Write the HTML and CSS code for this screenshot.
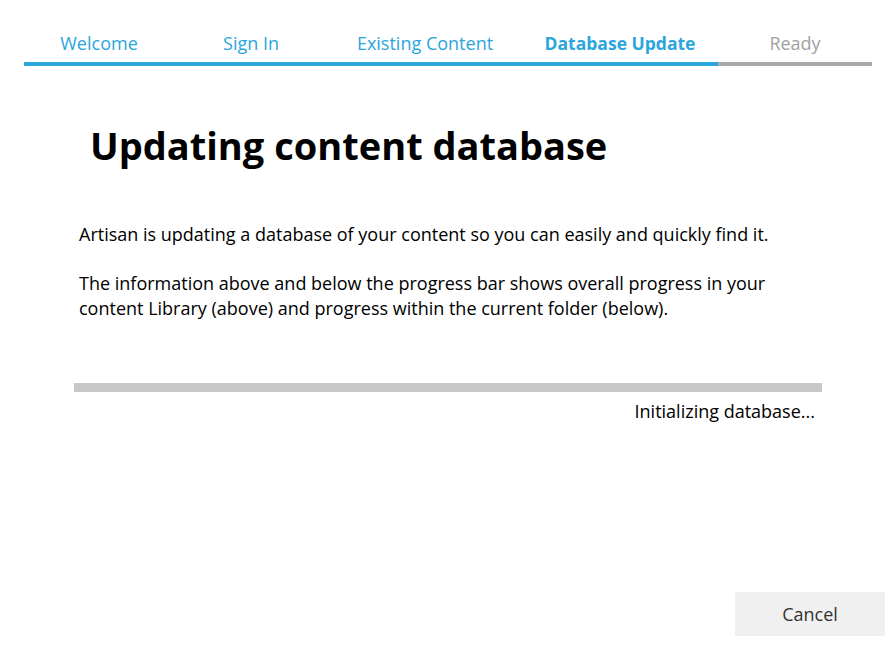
FILE: index.html
```html
<!DOCTYPE html>
<html lang="en">

<head>
    <meta charset="UTF-8">
    <meta name="viewport" content="width=device-width, initial-scale=1.0">
    <title>Artisan - Database Update</title>
    <link rel="stylesheet" href="styles.css">
</head>

<body>
    <!-- Steps -->
    <nav class="steps">
        <div class="step done" style="width: 150px">Welcome</div>
        <div class="step done" style="width: 154px">Sign In</div>
        <div class="step done" style="width: 194px">Existing Content</div>
        <div class="step current" style="width: 196px">Database Update</div>
        <div class="step" style="width: 154px">Ready</div>
    </nav>

    <!-- Content -->
    <main>
        <h1 class="title">Updating content database</h1>
        <p class="text">Artisan is updating a database of your content so you can easily and quickly find it.</p>
        <p class="text">The information above and below the progress bar shows overall progress in your content Library (above) and progress within the current folder (below).</p>

        <div class="progress">
            <div class="progress-bar"></div>
            <div class="progress-label">Initializing database...</div>
        </div>
    </main>

    <footer>
        <button class="btn-cancel">Cancel</button>
    </footer>
</body>

</html>
```

FILE: styles.css
```css
* {
    margin: 0;
    padding: 0;
    box-sizing: border-box;
    font-family: 'Open Sans', 'Liberation Sans', sans-serif;
}

:root {
    --blue: #2aa6dc;
    --grey-line: #a8a8a8;
    --grey-text: #a0a0a0;
    --bar: #c8c8c8;
}

body {
    background: #fff;
    color: #000;
    display: flex;
    flex-direction: column;
    min-height: 100vh;
}

/* Steps */
.steps {
    display: flex;
    padding: 30px 0 0 24px;
}

.step {
    text-align: center;
    font-size: 18px;
    line-height: 26px;
    padding-bottom: 6px;
    border-bottom: 4px solid var(--grey-line);
    color: var(--grey-text);
}

.step.done,
.step.current {
    color: var(--blue);
    border-bottom-color: var(--blue);
}

.step.current {
    font-weight: bold;
    font-size: 17.5px;
}

/* Content */
main {
    flex: 1;
}

.title {
    font-size: 38px;
    font-weight: bold;
    margin: 54px 0 52px 90px;
    line-height: 50px;
}

.text {
    font-size: 18px;
    line-height: 25px;
    margin: 0 0 24px 79px;
    max-width: 720px;
}

.progress {
    margin: 62px 0 0 74px;
    width: 748px;
}

.progress-bar {
    height: 9px;
    background: var(--bar);
}

.progress-label {
    text-align: right;
    font-size: 18px;
    line-height: 25px;
    margin-top: 7px;
    padding-right: 7px;
}

/* Footer */
footer {
    display: flex;
    justify-content: flex-end;
    padding: 0 11px 10px 0;
}

.btn-cancel {
    width: 150px;
    height: 44px;
    border: none;
    background: #f0f0f0;
    color: #333;
    font-size: 18px;
}
```
